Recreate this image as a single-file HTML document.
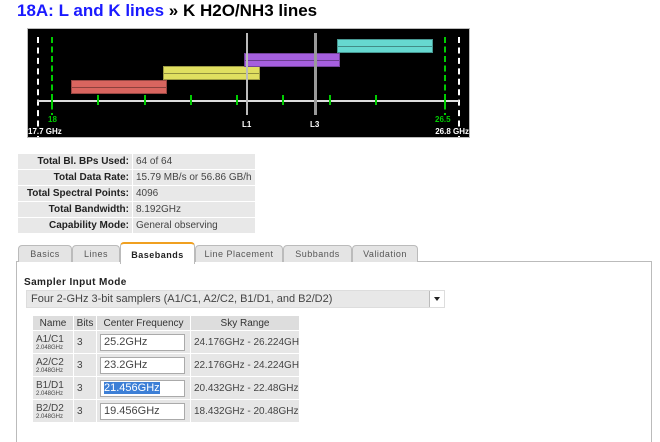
<!DOCTYPE html>
<html><head><style>
body{margin:0;width:660px;height:430px;background:#fff;font-family:"Liberation Sans",sans-serif;position:relative;overflow:hidden}
*{white-space:nowrap}
.a{position:absolute}
h1{position:absolute;left:17px;top:1px;margin:0;font-size:17px;font-weight:bold;color:#000}
h1 span{color:#1a1aff}
.chart{left:27px;top:28px;width:441px;height:108px;background:#000;border:1px solid #bbb}
.dw{position:absolute;width:0;border-left:2px dashed #fff}
.dg{position:absolute;width:0;border-left:2px dashed #0c0}
.tk{position:absolute;width:2px;height:10px;background:#0c0}
.bar{position:absolute;height:12px;border:1px solid rgba(0,0,0,.3)}
.bar:after{content:"";position:absolute;left:0;right:0;top:6px;height:1px;background:rgba(0,0,0,.35)}
.lbl{position:absolute;font-size:8px;font-weight:bold;color:#fff;background:#000}
.g{color:#0c0}
table.info{position:absolute;left:17px;top:153px;border-collapse:collapse;font-size:10px}
table.info td{border:1px solid #fff;background:#e8e8e8;height:15px;padding:0 3px;color:#444}
table.info td.k{text-align:right;font-weight:bold;color:#222;width:108px}
table.info td.v{width:112px}
.tab{position:absolute;top:245px;height:16px;background:#e4e4e4;border:1px solid #bbb;border-bottom:none;border-radius:4px 4px 0 0;font-size:9px;color:#555;text-align:center;line-height:17px;letter-spacing:.5px}
.tab.on{background:#fff;border-top:2px solid #f0a020;top:242px;height:20px;font-weight:bold;color:#222;line-height:22px}
.panel{left:16px;top:261px;width:634px;height:180px;border:1px solid #bbb;border-bottom:none}
.sel{left:26px;top:290px;width:417px;height:16px;background:#e8e8e8;border:1px solid #ddd;font-size:11px;color:#444;line-height:16px}
.sel span{padding-left:4px}
.sel i{position:absolute;right:0;top:0;width:14px;height:16px;border-left:1px solid #bbb;background:#fff}
.sel i:after{content:"";position:absolute;left:4px;top:6px;border:3px solid transparent;border-top:4px solid #222}
table.bb{position:absolute;left:32px;top:315px;width:267px;table-layout:fixed;border-collapse:collapse;font-size:10px;color:#444;background:#e6e6e6}
table.bb th{font-weight:normal;font-size:10px;border:1px solid #fff;height:14px;background:#ddd;color:#333;padding:0}
table.bb td{border:1px solid #fff;height:22px;padding:0 3px;vertical-align:middle;overflow:hidden}
table.bb small{font-size:6px;display:block}
.in{background:#fff;border:1px solid #aaa;width:80px;height:15px;font-size:11px;line-height:15px;padding-left:3px}
.hl{background:#3d7fd6;color:#fff}
</style></head><body>
<h1><span>18A: L and K lines</span> » K H2O/NH3 lines</h1>
<div class="a chart">
 <div class="dw" style="left:9px;top:8px;height:100px"></div>
 <div class="dw" style="left:430px;top:8px;height:100px"></div>
 <div class="dg" style="left:23px;top:8px;height:82px"></div>
 <div class="dg" style="left:416px;top:8px;height:82px"></div>
 <div style="position:absolute;left:9px;top:71px;width:422px;height:2px;background:#ddd"></div>
 <div class="tk" style="left:23px;top:66px"></div>
 <div class="tk" style="left:69px;top:66px"></div><div class="tk" style="left:116px;top:66px"></div><div class="tk" style="left:162px;top:66px"></div><div class="tk" style="left:208px;top:66px"></div><div class="tk" style="left:254px;top:66px"></div><div class="tk" style="left:301px;top:66px"></div><div class="tk" style="left:347px;top:66px"></div><div class="tk" style="left:416px;top:66px"></div>
 <div class="bar" style="left:43px;top:51px;width:94px;background:#d9655f"></div>
 <div class="bar" style="left:135px;top:37px;width:95px;background:#e0df60"></div>
 <div class="bar" style="left:216px;top:24px;width:94px;background:#a55fde"></div>
 <div class="bar" style="left:309px;top:10px;width:94px;background:#66d8d0"></div>
 <div style="position:absolute;left:218px;top:4px;width:2px;height:82px;background:#bbb"></div>
 <div style="position:absolute;left:286px;top:4px;width:3px;height:82px;background:#999"></div>
 <div class="lbl g" style="left:20px;top:86px">18</div>
 <div class="lbl g" style="left:407px;top:86px">26.5</div>
 <div class="lbl" style="left:0px;top:98px">17.7 GHz</div>
 <div class="lbl" style="right:0px;top:98px">26.8 GHz</div>
 <div class="lbl" style="left:214px;top:91px">L1</div>
 <div class="lbl" style="left:282px;top:91px">L3</div>
</div>
<table class="info">
<tr><td class="k">Total Bl. BPs Used:</td><td class="v">64 of 64</td></tr>
<tr><td class="k">Total Data Rate:</td><td class="v">15.79 MB/s or 56.86 GB/h</td></tr>
<tr><td class="k">Total Spectral Points:</td><td class="v">4096</td></tr>
<tr><td class="k">Total Bandwidth:</td><td class="v">8.192GHz</td></tr>
<tr><td class="k">Capability Mode:</td><td class="v">General observing</td></tr>
</table>
<div class="a panel"></div>
<div class="tab" style="left:18px;width:52px">Basics</div>
<div class="tab" style="left:72px;width:46px">Lines</div>
<div class="tab on" style="left:120px;width:73px">Basebands</div>
<div class="tab" style="left:195px;width:86px">Line Placement</div>
<div class="tab" style="left:283px;width:67px">Subbands</div>
<div class="tab" style="left:352px;width:64px">Validation</div>
<div class="a" style="left:24px;top:277px;font-size:10px;font-weight:bold;color:#222;letter-spacing:.4px">Sampler Input Mode</div>
<div class="a sel"><span>Four 2-GHz 3-bit samplers (A1/C1, A2/C2, B1/D1, and B2/D2)</span><i></i></div>
<table class="bb">
<colgroup><col style="width:41px"><col style="width:23px"><col style="width:94px"><col style="width:109px"></colgroup>
<tr><th>Name</th><th>Bits</th><th>Center Frequency</th><th>Sky Range</th></tr>
<tr><td>A1/C1<small>2.048GHz</small></td><td>3</td><td><div class="in">25.2GHz</div></td><td>24.176GHz - 26.224GHz</td></tr>
<tr><td>A2/C2<small>2.048GHz</small></td><td>3</td><td><div class="in">23.2GHz</div></td><td>22.176GHz - 24.224GHz</td></tr>
<tr><td>B1/D1<small>2.048GHz</small></td><td>3</td><td><div class="in"><span class="hl">21.456GHz</span></div></td><td>20.432GHz - 22.48GHz</td></tr>
<tr><td>B2/D2<small>2.048GHz</small></td><td>3</td><td><div class="in">19.456GHz</div></td><td>18.432GHz - 20.48GHz</td></tr>
</table>
</body></html>
